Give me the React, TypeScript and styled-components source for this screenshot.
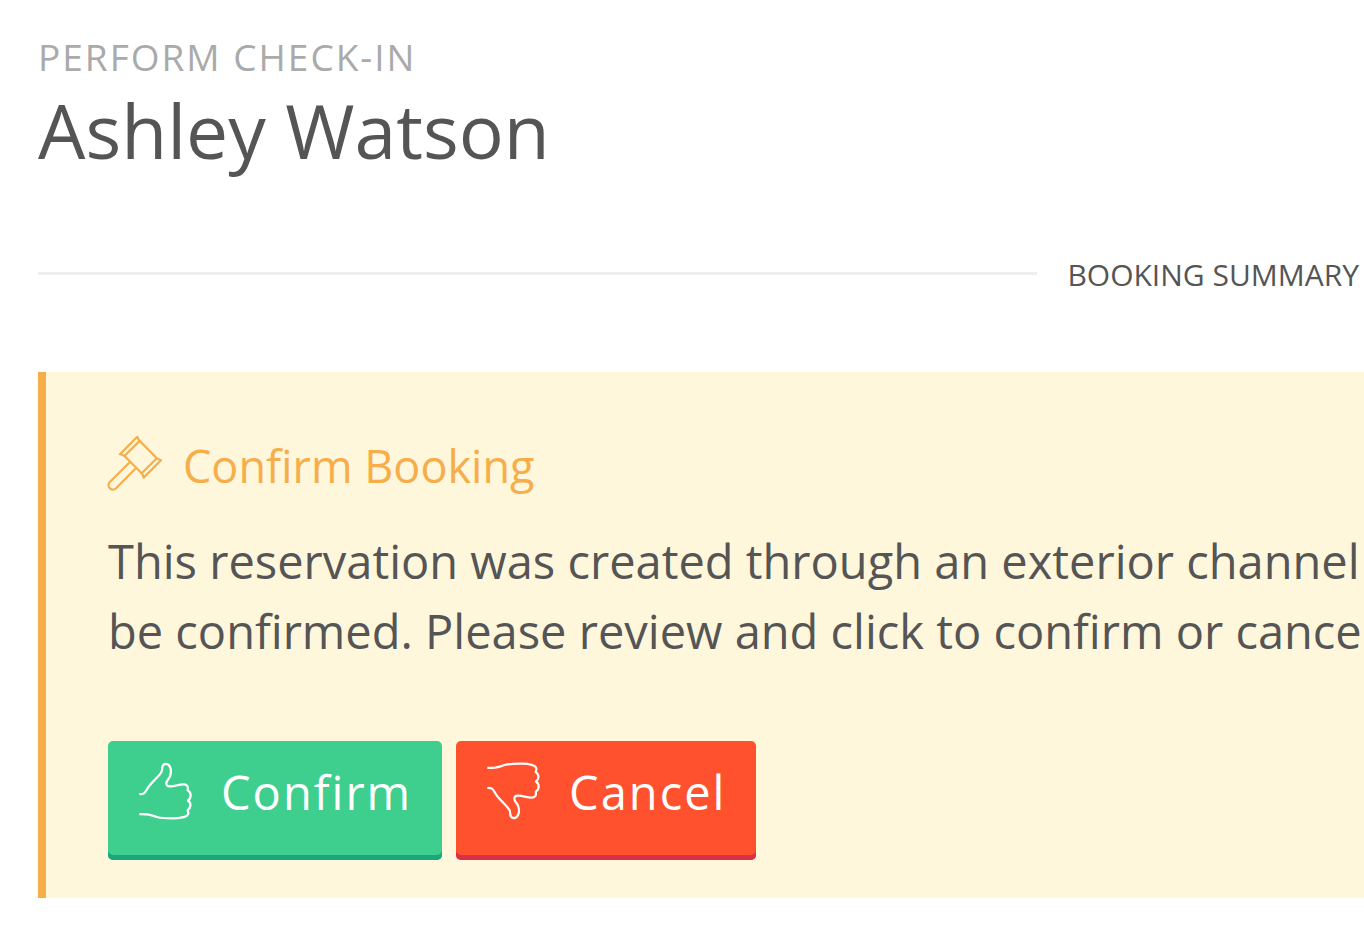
import React from "react";
import styled, { createGlobalStyle } from "styled-components";

const GlobalStyle = createGlobalStyle`
  *, *::before, *::after { box-sizing: border-box; }
  body {
    margin: 0;
    overflow-x: hidden;
    background: #fff;
    color: #555;
    font-family: "Open Sans", "Noto Sans", sans-serif;
  }
  h1, h2, h3, p { margin: 0; font-weight: 400; }
`;

const Page = styled.main`
  padding: 32px 0 30px 38px;
`;

const Eyebrow = styled.p`
  font-size: 37px;
  line-height: 50px;
  letter-spacing: 2px;
  text-transform: uppercase;
  color: #aaa;
`;

const GuestName = styled.h1`
  font-size: 75px;
  line-height: 96px;
`;

const SectionTitle = styled.h2`
  display: flex;
  align-items: center;
  gap: 30px;
  margin: 77px 0;
  padding-right: 5px;
  font-size: 30px;
  line-height: 40px;
  text-transform: uppercase;
  white-space: nowrap;

  &::before {
    content: "";
    flex: 1;
    height: 3px;
    margin-bottom: 4px;
    background: #eee;
  }
`;

const Icon = styled.svg`
  flex: none;
  overflow: visible;
  fill: none;
  stroke: currentColor;
  stroke-width: 2.2;
  stroke-linejoin: round;
`;

const Notice = styled.section`
  padding: 62px 0 38px 62px;
  border-left: 8px solid #f6ae4b;
  background: #fff7dc;
  overflow: hidden;
`;

const NoticeTitle = styled.h3`
  display: flex;
  align-items: center;
  gap: 19px;
  font-size: 45px;
  line-height: 64px;
  color: #f6ae4b;

  svg {
    margin-bottom: 4px;
  }
`;

const NoticeText = styled.p`
  margin-top: 28px;
  font-size: 47px;
  line-height: 70px;
  white-space: nowrap;
`;

const Actions = styled.div`
  display: flex;
  gap: 14px;
  margin-top: 75px;
`;

const ActionButton = styled.button<{ $fill: string; $edge: string }>`
  display: flex;
  align-items: center;
  gap: 27px;
  padding: 21px 30px 38px;
  border: 0;
  border-radius: 5px;
  background: ${(p) => p.$fill};
  box-shadow: inset 0 -5px 0 ${(p) => p.$edge};
  color: #fff;
  font: inherit;
  font-size: 47px;
  line-height: 60px;
  letter-spacing: 2px;
  cursor: pointer;

  svg {
    margin-bottom: 2px;
  }
`;

const GavelIcon = () => (
  <Icon width="56" height="56" viewBox="1 1 56 56" aria-hidden="true">
    <path d="M30.3 1.8 12.9 19.2Q15.500 19.600 17.500 21L32.600 5.900Q31.200 4.200 30.300 1.800Z" />
    <path d="M54 25.200 36.600 42.600Q36.200 40 34.700 38.200L49.800 23.200Q51.800 24.700 54 25.200Z" />
    <path d="M32.600 5.900 49.800 23.200M17.500 21 34.700 38.200" />
    <path d="M22.700 27.200 2.600 47.300A4.400 4.400 0 0 0 8.800 53.500L28.600 33.400" />
  </Icon>
);

const ThumbIcon = ({ down = false }: { down?: boolean }) => (
  <Icon width="56" height="58" viewBox="0 0 56 58" aria-hidden="true">
    <path
      transform={down ? "matrix(1 0 0 -1 0 58)" : undefined}
      d="M1.300 32C5.500 32.300 6.800 31.300 8.700 27.800C10.500 24.200 13.500 21 17 17.600C20 14.500 22 12.500 23.300 10.200C24.500 8 24.100 6.500 24.300 5.200C24.700 3 25.900 2 27.700 1.900C30.200 1.800 31.200 3 32.200 5.200C33.200 7.600 33.100 11 32.200 14C31.200 16.800 28.400 18.600 28.300 21.200C28.300 23.700 29.600 24.300 32 24.400C36.500 24.600 41 22.300 45.500 22.400C49 22.500 50.600 24.400 49.700 28.200C53.600 30.500 53.600 36 50 38.500C53.400 41 53.200 45.800 49.600 48.200C51.400 51.800 49.800 54 46.500 54.900C43 56 40 56.300 36 56.300C30.500 56.300 24 56.400 19.500 55.200C15.500 54.200 13 52.700 9 52.300C6.200 52.100 4 52.100 1.300 52.100"
    />
  </Icon>
);

export default function App() {
  return (
    <>
      <GlobalStyle />
      <Page>
        <Eyebrow>Perform check-in</Eyebrow>
        <GuestName>Ashley Watson</GuestName>
        <SectionTitle>Booking summary</SectionTitle>
        <Notice>
          <NoticeTitle>
            <GavelIcon />
            Confirm Booking
          </NoticeTitle>
          <NoticeText>
            This reservation was created through an exterior channel
            <br />
            be confirmed. Please review and click to confirm or cancel
          </NoticeText>
          <Actions>
            <ActionButton type="button" $fill="#3ecf8e" $edge="#1aa77b">
              <ThumbIcon />
              Confirm
            </ActionButton>
            <ActionButton type="button" $fill="#ff512d" $edge="#d83048">
              <ThumbIcon down />
              Cancel
            </ActionButton>
          </Actions>
        </Notice>
      </Page>
    </>
  );
}
